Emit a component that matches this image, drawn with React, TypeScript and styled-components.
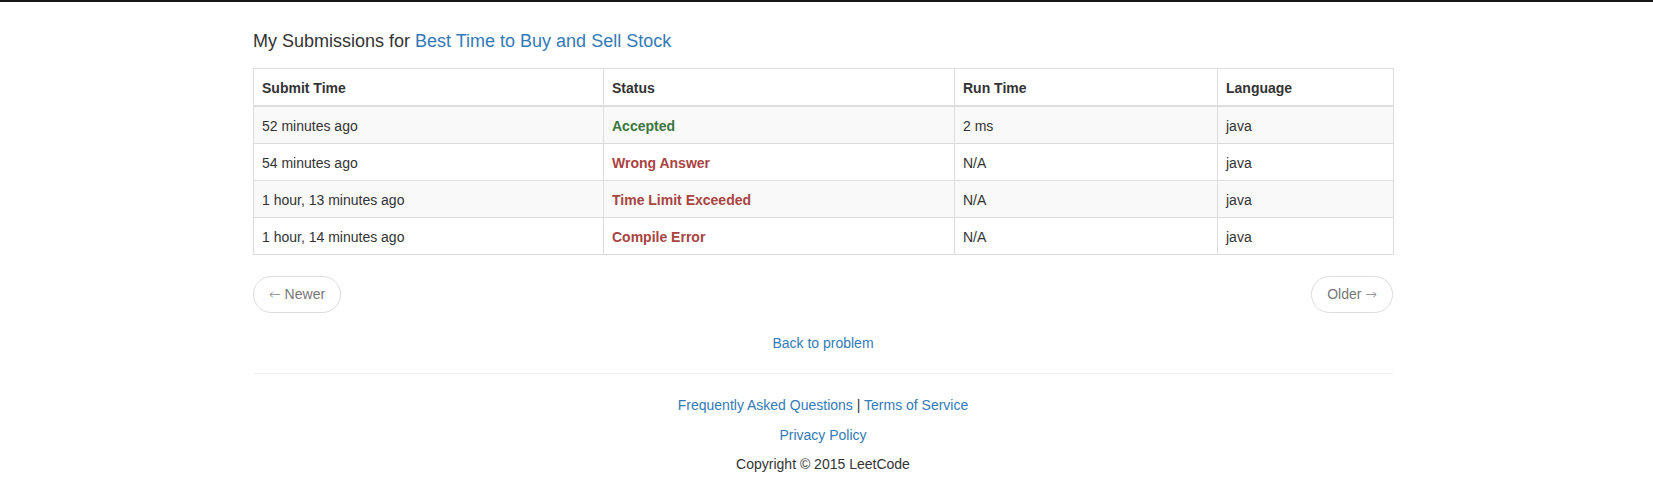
import React from "react";
import styled, { createGlobalStyle } from "styled-components";

const GlobalStyle = createGlobalStyle`
  html, body {
    margin: 0;
    padding: 0;
    background: #fff;
  }
  body {
    font-family: "Liberation Sans", Arial, Helvetica, sans-serif;
    font-size: 14px;
    line-height: 20px;
    color: #333;
  }
`;

const TopBar = styled.div`
  height: 2px;
  background: #161616;
`;

const Page = styled.div`
  padding: 0 7px 0 0;
`;

const Container = styled.div`
  width: 1140px;
  margin: 0 auto;
  display: flex;
  flex-direction: column;
`;

const Heading = styled.h4`
  margin: 29px 0 17px;
  font-size: 18px;
  line-height: 20px;
  font-weight: 400;
  color: #333;
`;

const Link = styled.a`
  color: #337ab7;
  text-decoration: none;
  cursor: pointer;
`;

const Table = styled.table`
  width: 1140px;
  border-collapse: collapse;
  border-spacing: 0;
  border: 1px solid #ddd;
  table-layout: fixed;
`;

const HeadCell = styled.th<{ $w: number }>`
  box-sizing: border-box;
  width: ${(p) => p.$w}px;
  text-align: left;
  font-weight: 700;
  padding: 9px 8px 7px;
  line-height: 20px;
  border: 1px solid #ddd;
  border-bottom: 2px solid #ddd;
  color: #333;
`;

const BodyRow = styled.tr`
  &:nth-child(odd) {
    background: #f9f9f9;
  }
`;

const Cell = styled.td`
  padding: 9px 8px 7px;
  line-height: 20px;
  border: 1px solid #ddd;
  color: #333;
`;

const Status = styled.strong<{ $ok: boolean }>`
  font-weight: 700;
  color: ${(p) => (p.$ok ? "#3c763d" : "#a94442")};
`;

const Pager = styled.div`
  display: flex;
  justify-content: space-between;
  margin: 21px 0 0;
`;

const PagerButton = styled.span`
  display: inline-block;
  padding: 8px 15px;
  line-height: 19px;
  border: 1px solid #ddd;
  border-radius: 19px;
  background: #fff;
  color: #777;
  cursor: not-allowed;
`;

const Arrow = styled.span`
  font-family: "DejaVu Sans", sans-serif;
  font-size: 14px;
  font-weight: 300;
  color: #888;
`;

const BackRow = styled.div`
  text-align: center;
  margin: 20px 0 20px;
`;

const Rule = styled.hr`
  margin: 0 0 20px;
  border: 0;
  border-top: 1px solid #eee;
  height: 0;
`;

const Footer = styled.footer`
  text-align: center;
  padding-top: 1px;
`;

const FooterLine = styled.p`
  margin: 0 0 9.5px;
  line-height: 20px;
`;

const columns = [
  { label: "Submit Time", w: 350 },
  { label: "Status", w: 351 },
  { label: "Run Time", w: 263 },
  { label: "Language", w: 176 },
];

const rows = [
  { time: "52 minutes ago", status: "Accepted", ok: true, run: "2 ms", lang: "java" },
  { time: "54 minutes ago", status: "Wrong Answer", ok: false, run: "N/A", lang: "java" },
  { time: "1 hour, 13 minutes ago", status: "Time Limit Exceeded", ok: false, run: "N/A", lang: "java" },
  { time: "1 hour, 14 minutes ago", status: "Compile Error", ok: false, run: "N/A", lang: "java" },
];

export default function App() {
  return (
    <>
      <GlobalStyle />
      <TopBar />
      <Page>
        <Container>
          <Heading>
            My Submissions for <Link>Best Time to Buy and Sell Stock</Link>
          </Heading>
          <Table>
            <thead>
              <tr>
                {columns.map((c) => (
                  <HeadCell key={c.label} $w={c.w}>
                    {c.label}
                  </HeadCell>
                ))}
              </tr>
            </thead>
            <tbody>
              {rows.map((r, i) => (
                <BodyRow key={i}>
                  <Cell>{r.time}</Cell>
                  <Cell>
                    <Status $ok={r.ok}>{r.status}</Status>
                  </Cell>
                  <Cell>{r.run}</Cell>
                  <Cell>{r.lang}</Cell>
                </BodyRow>
              ))}
            </tbody>
          </Table>
          <Pager>
            <PagerButton>
              <Arrow>←</Arrow> Newer
            </PagerButton>
            <PagerButton>
              Older <Arrow>→</Arrow>
            </PagerButton>
          </Pager>
          <BackRow>
            <Link>Back to problem</Link>
          </BackRow>
          <Rule />
          <Footer>
            <FooterLine>
              <Link>Frequently Asked Questions</Link> | <Link>Terms of Service</Link>
            </FooterLine>
            <FooterLine>
              <Link>Privacy Policy</Link>
            </FooterLine>
            <FooterLine>Copyright © 2015 LeetCode</FooterLine>
          </Footer>
        </Container>
      </Page>
    </>
  );
}
